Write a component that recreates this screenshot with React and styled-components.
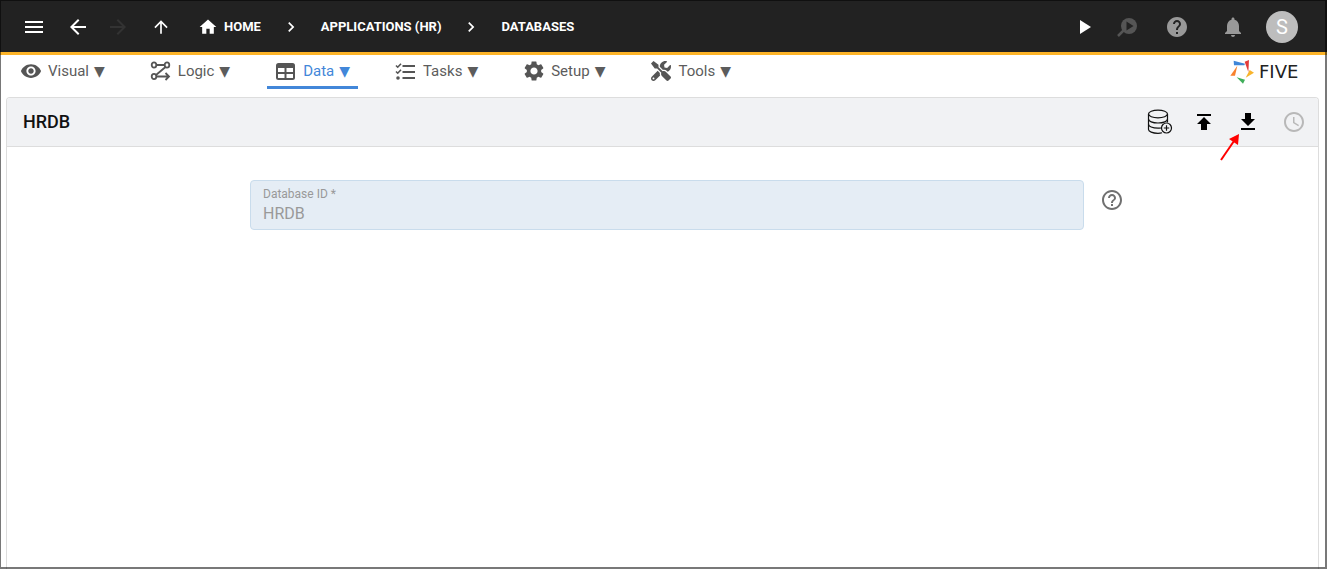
import React from "react";
import styled, { createGlobalStyle } from "styled-components";
import {
  MdMenu,
  MdArrowBack,
  MdArrowForward,
  MdArrowUpward,
  MdHome,
  MdChevronRight,
  MdPlayArrow,
  MdHelp,
  MdNotifications,
  MdVisibility,
  MdSettings,
  MdHelpOutline,
  MdAccessTime,
} from "react-icons/md";
import { FaTools } from "react-icons/fa";

const LogicIcon = () => (
  <svg width="22" height="22" viewBox="0 0 22 22" fill="none" stroke="currentColor" strokeWidth="1.800">
    <ellipse cx="4" cy="5" rx="2.300" ry="2.600" />
    <ellipse cx="17" cy="5" rx="2.300" ry="2.600" />
    <ellipse cx="4" cy="16.500" rx="2.300" ry="2.600" />
    <path d="M6.500 5h8M15.500 7L6 15M6.500 16.500h12M15.500 13L19 16.500 15.500 20" />
  </svg>
);

const TableIcon = () => (
  <svg width="22" height="22" viewBox="0 0 22 22">
    <rect x="1" y="3" width="19" height="17" rx="2.500" fill="currentColor" />
    <path d="M3 8h6.500v4H3zM11.500 8H18v4h-6.500zM3 14h6.500v4H3zM11.500 14H18v4h-6.500z" fill="#fff" />
  </svg>
);

const TasksIcon = () => (
  <svg width="22" height="22" viewBox="0 0 22 22" fill="none" stroke="currentColor" strokeWidth="2">
    <path d="M7.500 6H20M7.500 12H20M7.500 18H20" />
    <path d="M1 5.500l1.700 1.700L6 3.700M1 11.500l1.700 1.700L6 9.700" strokeWidth="1.600" />
    <circle cx="3" cy="18" r="1.800" fill="currentColor" stroke="none" />
  </svg>
);

const InspectIcon = () => (
  <svg width="24" height="24" viewBox="0 0 24 24">
    <path d="M9 15l-6 6" stroke="currentColor" strokeWidth="2.500" />
    <circle cx="14" cy="11" r="8" fill="currentColor" />
    <path d="M11.500 6.500v9l7-4.500z" fill="#222" />
  </svg>
);

const DatabaseAddIcon = () => (
  <svg width="26" height="26" viewBox="0 0 26 26" fill="none" stroke="currentColor" strokeWidth="1.200">
    <ellipse cx="11" cy="5" rx="9.500" ry="3.800" />
    <path d="M1.500 5v15.500c0 2 4 3.800 9.500 3.800 1.500 0 3-.2 4-.5M20.500 5v8.500" />
    <path d="M1.500 10c0 2.200 4 4 9.500 4s9.500-1.800 9.500-4M1.500 15.200c0 2.200 4 4 9.500 4 1 0 2-.1 3-.2" />
    <circle cx="19.500" cy="19" r="5" fill="#f1f2f4" />
    <path d="M19.500 16.300v5.400M16.800 19h5.400" />
  </svg>
);

const UploadIcon = () => (
  <svg width="24" height="24" viewBox="0 0 24 24" fill="currentColor">
    <path d="M5 4v2h14V4H5zm0 10h4v6h6v-6h4l-7-7-7 7z" />
  </svg>
);

const DownloadIcon = () => (
  <svg width="24" height="24" viewBox="0 0 24 24" fill="currentColor">
    <path d="M19 9h-4V3H9v6H5l7 7 7-7zM5 18v2h14v-2H5z" />
  </svg>
);

const LogoMark = () => (
  <svg width="24" height="24" viewBox="0 0 72 72">
    <path d="M11 2l34 9-2 5H12z" fill="#3f86d8" />
    <path d="M44 5l13-5-2 36z" fill="#e23b3b" />
    <path d="M47 53l12-23 13 8z" fill="#f8b42c" />
    <path d="M20 52l25 7-6 12z" fill="#3fae5a" />
    <path d="M1 47l21-30-7 30z" fill="#f8812c" />
  </svg>
);

const tabs = [
  { name: "Visual", icon: <MdVisibility size={22} /> },
  { name: "Logic", icon: <LogicIcon /> },
  { name: "Data", icon: <TableIcon />, active: true },
  { name: "Tasks", icon: <TasksIcon /> },
  { name: "Setup", icon: <MdSettings size={24} /> },
  { name: "Tools", icon: <FaTools size={20} /> },
];

export default function App() {
  return (
    <Page>
      <GlobalStyle />
      <TopBar>
        <BarGroup>
          <IconButton aria-label="Menu" $width={44}>
            <MdMenu size={24} />
          </IconButton>
          <IconButton aria-label="Back" $width={44}>
            <MdArrowBack size={24} />
          </IconButton>
          <IconButton aria-label="Forward" $width={36} $color="#333" disabled>
            <MdArrowForward size={24} />
          </IconButton>
          <IconButton aria-label="Up" $width={50}>
            <MdArrowUpward size={20} />
          </IconButton>
        </BarGroup>
        <Breadcrumbs aria-label="Breadcrumb">
          <Crumb href="#home">
            <MdHome size={20} />
            HOME
          </Crumb>
          <MdChevronRight size={20} />
          <Crumb href="#applications">APPLICATIONS (HR)</Crumb>
          <MdChevronRight size={20} />
          <Crumb href="#databases">DATABASES</Crumb>
        </Breadcrumbs>
        <BarGroup>
          <IconButton aria-label="Run" $width={36}>
            <MdPlayArrow size={24} />
          </IconButton>
          <IconButton aria-label="Inspect" $width={50} $color="#555" disabled>
            <InspectIcon />
          </IconButton>
          <IconButton aria-label="Help" $width={50} $color="#999">
            <MdHelp size={24} />
          </IconButton>
          <IconButton aria-label="Notifications" $width={62} $color="#999">
            <MdNotifications size={24} />
          </IconButton>
          <Avatar aria-label="Account">S</Avatar>
        </BarGroup>
      </TopBar>
      <TabBar>
        <Tabs>
          {tabs.map((tab) => (
            <Tab key={tab.name} $active={tab.active}>
              <TabIcon>{tab.icon}</TabIcon>
              {tab.name}
              <Caret>▼</Caret>
            </Tab>
          ))}
        </Tabs>
        <Logo>
          <LogoMark />
          <LogoText>FIVE</LogoText>
        </Logo>
      </TabBar>
      <Panel>
        <PanelHeader>
          <Title>HRDB</Title>
          <BarGroup>
            <IconButton aria-label="Add database" $width={44} $color="#111">
              <DatabaseAddIcon />
            </IconButton>
            <IconButton aria-label="Import" $width={44} $color="#000">
              <UploadIcon />
            </IconButton>
            <IconButton aria-label="Export" $width={44} $color="#000">
              <DownloadIcon />
              <Pointer width="22" height="30" viewBox="0 0 22 30">
                <path d="M2 28L15 9" stroke="#f00" strokeWidth="2" />
                <path d="M20 2l-1 11-9-6z" fill="#f00" />
              </Pointer>
            </IconButton>
            <IconButton aria-label="History" $width={48} $color="#b8b8b8" disabled>
              <MdAccessTime size={24} />
            </IconButton>
          </BarGroup>
        </PanelHeader>
        <Form>
          <Field>
            <Label htmlFor="database-id">Database ID *</Label>
            <Input id="database-id" type="text" defaultValue="HRDB" disabled />
          </Field>
          <HelpCell>
            <IconButton type="button" aria-label="Field help" $width={24} $color="#707070">
              <MdHelpOutline size={24} />
            </IconButton>
          </HelpCell>
        </Form>
      </Panel>
    </Page>
  );
}

const GlobalStyle = createGlobalStyle`
  * {
    box-sizing: border-box;
  }
  body {
    margin: 0;
    font-family: Roboto, "Liberation Sans", sans-serif;
    background-color: white;
  }
  svg {
    display: block;
    flex-shrink: 0;
  }
`;
const Page = styled.div`
  min-height: 100vh;
  display: flex;
  flex-direction: column;
  &::after {
    content: "";
    position: fixed;
    inset: 0;
    border: solid rgba(0, 0, 0, 0.53);
    border-width: 1px 2px 2px 1px;
    pointer-events: none;
  }
`;
const TopBar = styled.header`
  height: 55px;
  padding: 2px 29px 0 12px;
  background-color: #222;
  border-bottom: 3px solid #fdb428;
  color: white;
  display: flex;
  align-items: center;
`;
const BarGroup = styled.div`
  display: flex;
  align-items: center;
`;
const IconButton = styled.button`
  position: relative;
  width: ${(props) => props.$width}px;
  height: 32px;
  padding: 0;
  border: none;
  background: none;
  color: ${(props) => props.$color || "white"};
  display: flex;
  justify-content: center;
  align-items: center;
`;
const Breadcrumbs = styled.nav`
  flex: 1;
  padding-left: 12px;
  display: flex;
  align-items: center;
  gap: 20px;
`;
const Crumb = styled.a`
  color: white;
  font-size: 13px;
  font-weight: 700;
  line-height: 22px;
  text-decoration: none;
  display: flex;
  align-items: center;
  gap: 6px;
`;
const Avatar = styled.button`
  width: 32px;
  height: 32px;
  margin-left: 2px;
  padding: 0;
  border: none;
  border-radius: 50%;
  background-color: #bdbdbd;
  color: white;
  font-family: inherit;
  font-size: 20px;
`;
const TabBar = styled.div`
  height: 42px;
  padding: 0 10px 0 12px;
  display: flex;
  justify-content: space-between;
  align-items: flex-start;
`;
const Tabs = styled.nav`
  display: flex;
  gap: 29px;
`;
const Tab = styled.button`
  height: 34px;
  padding: 0 8px;
  border: none;
  border-bottom: 3px solid ${(props) => (props.$active ? "#4287d9" : "transparent")};
  border-radius: 2px 2px 0 0;
  background: none;
  color: ${(props) => (props.$active ? "#4287d9" : "#5c5c5c")};
  font-family: inherit;
  font-size: 15px;
  font-weight: 400;
  line-height: 20px;
  display: flex;
  align-items: center;
`;
const TabIcon = styled.span`
  width: 22px;
  margin-right: 6px;
  color: #555;
  display: flex;
  justify-content: center;
`;
const Caret = styled.span`
  margin-left: 5px;
  font-family: "DejaVu Sans", sans-serif;
  font-size: 14px;
`;
const Logo = styled.div`
  padding-top: 5px;
  display: flex;
  align-items: center;
  gap: 5px;
`;
const LogoText = styled.span`
  width: 58px;
  color: #222;
  font-family: "DejaVu Sans", sans-serif;
  font-size: 18px;
  line-height: 24px;
`;
const Panel = styled.main`
  flex: 1;
  margin: 0 8px 0 6px;
  border: 1px solid #ddd;
  border-bottom: none;
  border-radius: 4px 4px 0 0;
`;
const PanelHeader = styled.div`
  height: 49px;
  padding-left: 16px;
  border-bottom: 1px solid #ddd;
  border-radius: 3px 3px 0 0;
  background-color: #f1f2f4;
  display: flex;
  justify-content: space-between;
  align-items: center;
`;
const Title = styled.h1`
  margin: 0;
  color: #111;
  font-size: 18px;
  font-weight: 500;
  line-height: 24px;
`;
// sits over the export button and points at its icon
const Pointer = styled.svg`
  position: absolute;
  top: 26px;
  left: -7px;
`;
const Form = styled.form`
  padding-top: 33px;
  display: grid;
  grid-template-columns: 243fr 834fr 234fr;
`;
const Field = styled.div`
  grid-column: 2;
  height: 50px;
  padding: 4px 12px;
  border: 1px solid #c9dcec;
  border-radius: 4px;
  background-color: #e5edf5;
  display: flex;
  flex-direction: column;
`;
const Label = styled.label`
  color: #999;
  font-size: 12px;
  line-height: 18px;
`;
const Input = styled.input`
  width: 100%;
  height: 20px;
  padding: 0;
  border: none;
  background: none;
  color: #999;
  font-family: inherit;
  font-size: 16px;
`;
const HelpCell = styled.div`
  padding: 4px 16px;
`;
